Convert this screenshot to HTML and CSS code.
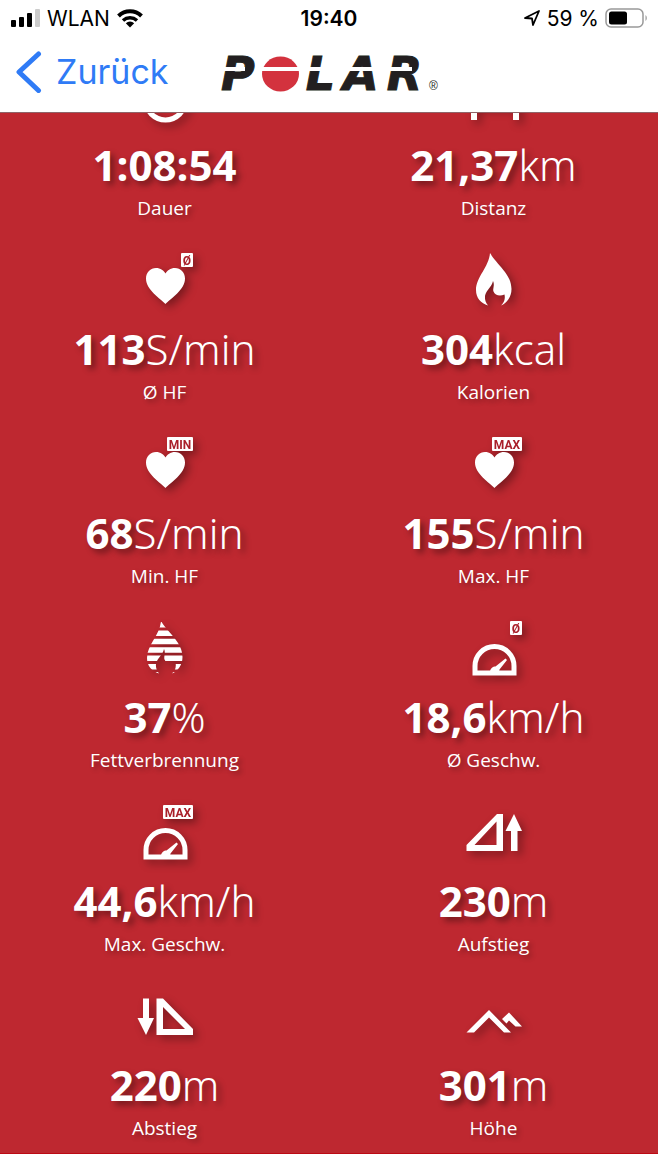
FILE: index.html
```html
<!DOCTYPE html>
<html lang="de">

<head>
    <meta charset="UTF-8">
    <meta name="viewport" content="width=device-width, initial-scale=1.0">
    <title>Polar Training</title>
    <link rel="stylesheet" href="styles.css">
</head>

<body>
    <!-- Shared icon shapes -->
    <svg class="defs" width="0" height="0" aria-hidden="true">
        <defs>
            <path id="heart" d="M28.500 51C24 46 9 37 9 25.500C9 19.500 13.500 15 19 15C23.500 15 27 17.500 28.500 20.500C30 17.500 33.500 15 38 15C43.500 15 48 19.500 48 25.500C48 37 33 46 28.500 51Z" />
            <path id="flame" d="M24 0C23 14 10 24 10 37C10 45 15 50.500 22 52.500C20 50 18.500 47 19 43C20 37 26 34 27 28C29 32 26.500 36 27.500 38.500C29 42.500 34 43.500 38.500 41.500C39.500 46 38 50 35 52.500C41 50 45.500 44 45.500 36C45.500 21 31 12 24 0Z" />
            <clipPath id="flame-clip">
                <use href="#flame" />
            </clipPath>
            <g id="gauge">
                <path d="M9 52V45a19.500 19.500 0 0 1 39 0V52Z" fill="none" stroke="#fff" stroke-width="5" />
                <path d="M24 51C24 47.500 27 45.500 29.500 45.500L39.500 37.500L41 39L33.500 48.500L33 51Z" />
            </g>
        </defs>
    </svg>

    <header class="header">
        <div class="status">
            <div class="status-left">
                <svg width="30" height="20" viewBox="0 0 30 20" aria-hidden="true">
                    <rect x="1" y="12" width="5" height="7" rx="1" />
                    <rect x="9" y="9" width="5" height="10" rx="1" />
                    <rect x="17" y="5" width="5" height="14" rx="1" />
                    <rect x="25" y="1" width="5" height="18" rx="1" fill="#ccc" />
                </svg>
                <span>WLAN</span>
                <svg width="26" height="20" viewBox="0 0 26 20" aria-hidden="true">
                    <path d="M1.500 8A16.500 16.500 0 0 1 24.500 8" fill="none" stroke="#000" stroke-width="4" />
                    <path d="M6 12.500A10.500 10.500 0 0 1 20 12.500" fill="none" stroke="#000" stroke-width="3.500" />
                    <path d="M8.800 15.300A6 6 0 0 1 17.200 15.300L13 19.500Z" />
                </svg>
            </div>
            <time class="clock">19:40</time>
            <div class="status-right">
                <svg width="18" height="18" viewBox="0 0 18 18" aria-hidden="true">
                    <path d="M2 9L16 2L10 16L9 9.500Z" fill="none" stroke="#000" stroke-width="1.800" stroke-linejoin="round" />
                </svg>
                <span>59 %</span>
                <svg width="43" height="20" viewBox="0 0 43 20" aria-hidden="true">
                    <rect x="1" y="1" width="37" height="18" rx="5" fill="none" stroke="#999" stroke-width="1.500" />
                    <rect x="4" y="3.500" width="18" height="13" rx="2.500" />
                    <path d="M40.500 7a4 4 0 0 1 0 6Z" fill="#999" />
                </svg>
            </div>
        </div>
        <nav class="nav">
            <a class="back" href="#">
                <svg width="26" height="42" viewBox="0 0 26 42" aria-hidden="true">
                    <path d="M22.500 3L3 21L22.500 39.500" fill="none" stroke="#2f7bf6" stroke-width="5" stroke-linecap="round" stroke-linejoin="round" />
                </svg>
                Zurück
            </a>
            <div class="logo">
                <span class="letter bowl">P</span>
                <svg class="logo-ball" width="37" height="36" viewBox="0 0 37 36" role="img" aria-label="O">
                    <ellipse cx="18.500" cy="18" rx="18.500" ry="17.500" fill="#d3323e" />
                    <rect y="11" width="37" height="4" fill="#fff" />
                </svg>
                <span class="letter">L</span>
                <span class="letter">A</span>
                <span class="letter bowl">R</span>
                <span class="registered">®</span>
            </div>
        </nav>
    </header>

    <main class="panel">
        <div class="stats">
            <section class="stat">
                <svg class="icon" viewBox="0 0 56 56" aria-hidden="true">
                    <circle cx="28.500" cy="31" r="20" fill="none" stroke="#fff" stroke-width="5" />
                </svg>
                <div class="value"><b>1:08:54</b></div>
                <div class="name">Dauer</div>
            </section>
            <section class="stat">
                <svg class="icon" viewBox="0 0 56 56" aria-hidden="true">
                    <path d="M5 20h6v31h-6zM47 20h6v31h-6zM11 32h36v6h-36z" />
                </svg>
                <div class="value"><b>21,37</b>km</div>
                <div class="name">Distanz</div>
            </section>
            <section class="stat">
                <svg class="icon" viewBox="0 0 56 56" aria-hidden="true">
                    <use href="#heart" />
                    <rect x="44" y="0" width="12" height="14" rx="1" />
                    <text class="badge" x="50" y="12">Ø</text>
                </svg>
                <div class="value"><b>113</b>S/min</div>
                <div class="name">Ø HF</div>
            </section>
            <section class="stat">
                <svg class="icon" viewBox="0 0 56 56" aria-hidden="true">
                    <use href="#flame" />
                </svg>
                <div class="value"><b>304</b>kcal</div>
                <div class="name">Kalorien</div>
            </section>
            <section class="stat">
                <svg class="icon" viewBox="0 0 56 56" aria-hidden="true">
                    <use href="#heart" />
                    <rect x="30" y="0" width="26" height="14" rx="1" />
                    <text class="badge" x="43" y="12">MIN</text>
                </svg>
                <div class="value"><b>68</b>S/min</div>
                <div class="name">Min. HF</div>
            </section>
            <section class="stat">
                <svg class="icon" viewBox="0 0 56 56" aria-hidden="true">
                    <use href="#heart" />
                    <rect x="26" y="0" width="30" height="14" rx="1" />
                    <text class="badge" x="41" y="12">MAX</text>
                </svg>
                <div class="value"><b>155</b>S/min</div>
                <div class="name">Max. HF</div>
            </section>
            <section class="stat">
                <svg class="icon" viewBox="0 0 56 56" aria-hidden="true">
                    <path clip-path="url(#flame-clip)" d="M0 1h56v5.500h-56zM0 9.400h56v5.500h-56zM0 17.800h56v5.500h-56zM0 26.200h56v5.500h-56zM0 34.600h56v5.500h-56zM0 43h56v5.500h-56zM0 51h56v5h-56z" />
                </svg>
                <div class="value"><b>37</b>%</div>
                <div class="name">Fettverbrennung</div>
            </section>
            <section class="stat">
                <svg class="icon" viewBox="0 0 56 56" aria-hidden="true">
                    <use href="#gauge" />
                    <rect x="44" y="0" width="12" height="14" rx="1" />
                    <text class="badge" x="50" y="12">Ø</text>
                </svg>
                <div class="value"><b>18,6</b>km/h</div>
                <div class="name">Ø Geschw.</div>
            </section>
            <section class="stat">
                <svg class="icon" viewBox="0 0 56 56" aria-hidden="true">
                    <use href="#gauge" />
                    <rect x="26" y="0" width="30" height="14" rx="1" />
                    <text class="badge" x="41" y="12">MAX</text>
                </svg>
                <div class="value"><b>44,6</b>km/h</div>
                <div class="name">Max. Geschw.</div>
            </section>
            <section class="stat">
                <svg class="icon" viewBox="0 0 56 56" aria-hidden="true">
                    <path fill-rule="evenodd" d="M0.500 40L31 9H37V46H0.500ZM30.500 16.500V40H8.500Z" />
                    <path d="M48 9L56 26H51.500V46H45V26H39.500Z" />
                </svg>
                <div class="value"><b>230</b>m</div>
                <div class="name">Aufstieg</div>
            </section>
            <section class="stat">
                <svg class="icon" viewBox="0 0 56 56" aria-hidden="true">
                    <path d="M6 9.500H12V29H17L9 46L0.500 29H6Z" />
                    <path fill-rule="evenodd" d="M19.500 9.500H26L56 40V46H19.500ZM26 18V40H48Z" />
                </svg>
                <div class="value"><b>220</b>m</div>
                <div class="name">Abstieg</div>
            </section>
            <section class="stat">
                <svg class="icon" viewBox="0 0 56 56" aria-hidden="true">
                    <path d="M0.500 43.500L23 21L45 43.500H38L23 28.500L8 43.500Z" />
                    <path d="M36 30L43 23.500L56 37.500H49.500L43 31.500L40.500 34.500Z" />
                </svg>
                <div class="value"><b>301</b>m</div>
                <div class="name">Höhe</div>
            </section>
        </div>
    </main>
</body>

</html>
```

FILE: styles.css
```css
body {
    margin: 0;
    background-color: white;
    font-family: "Open Sans", sans-serif;
}

.defs {
    display: block;
}

/* Status bar and navigation */
.header {
    background-color: white;
    border-bottom: 1px solid #8f6468;
    font-family: Inter, "Liberation Sans", sans-serif;
}

.status {
    display: grid;
    grid-template-columns: 1fr auto 1fr;
    align-items: center;
    height: 36px;
    padding: 0 10px;
    font-size: 21px;
    color: black;
}

.status-left {
    display: flex;
    align-items: center;
    gap: 7px;
}

.status-right {
    display: flex;
    align-items: center;
    justify-content: flex-end;
    gap: 6px;
}

.clock {
    font-weight: 600;
}

.nav {
    display: grid;
    grid-template-columns: 1fr auto 1fr;
    align-items: center;
    height: 76px;
    padding: 0 16px;
}

.back {
    display: flex;
    align-items: center;
    gap: 14px;
    padding-bottom: 5px;
    font-size: 34px;
    color: #2f7bf6;
    text-decoration: none;
}

.logo {
    display: flex;
    align-items: center;
    gap: 6px;
    height: 36px;
    color: #221f20;
}

.letter {
    position: relative;
    font-family: "DejaVu Sans", Verdana, sans-serif;
    font-size: 46px;
    font-weight: 700;
    font-style: italic;
    line-height: 36px;
    padding: 0 1px;
    -webkit-text-stroke: 1px #221f20;
}

/* White line through the letters */
.letter::after {
    content: "";
    position: absolute;
    left: 0;
    top: 11px;
    width: 100%;
    height: 4px;
    background-color: white;
}

.bowl::after {
    width: 70%;
}

.registered {
    align-self: flex-end;
    font-family: "Liberation Sans", sans-serif;
    font-size: 12px;
    line-height: 12px;
}

/* Training values */
.panel {
    overflow: hidden;
    background-color: #be2830;
    border-bottom: 1px solid #bc0a14;
}

.stats {
    display: grid;
    grid-template-columns: 1fr 1fr;
    margin-top: -64px; /* First row is scrolled under the header */
}

.stat {
    display: flex;
    flex-direction: column;
    align-items: center;
    padding: 20px 0 10px;
    color: white;
}

.icon {
    width: 56px;
    height: 56px;
    margin-bottom: 12px;
    overflow: visible;
    fill: white;
    filter: drop-shadow(4px 4px 4px rgba(0, 0, 0, 0.35));
}

.badge {
    font-family: Roboto, sans-serif;
    font-size: 12px;
    font-weight: bold;
    text-anchor: middle;
    fill: #a91f29;
}

.value {
    font-family: "Noto Sans", "Open Sans", sans-serif;
    font-size: 42px;
    font-weight: 340;
    line-height: 56px;
    text-shadow: 4px 4px 6px rgba(0, 0, 0, 0.4);
}

.value b {
    font-family: "Open Sans", sans-serif;
    font-weight: 700;
}

.name {
    font-size: 19px;
    line-height: 30px;
    text-shadow: 3px 3px 5px rgba(0, 0, 0, 0.3);
}
```
